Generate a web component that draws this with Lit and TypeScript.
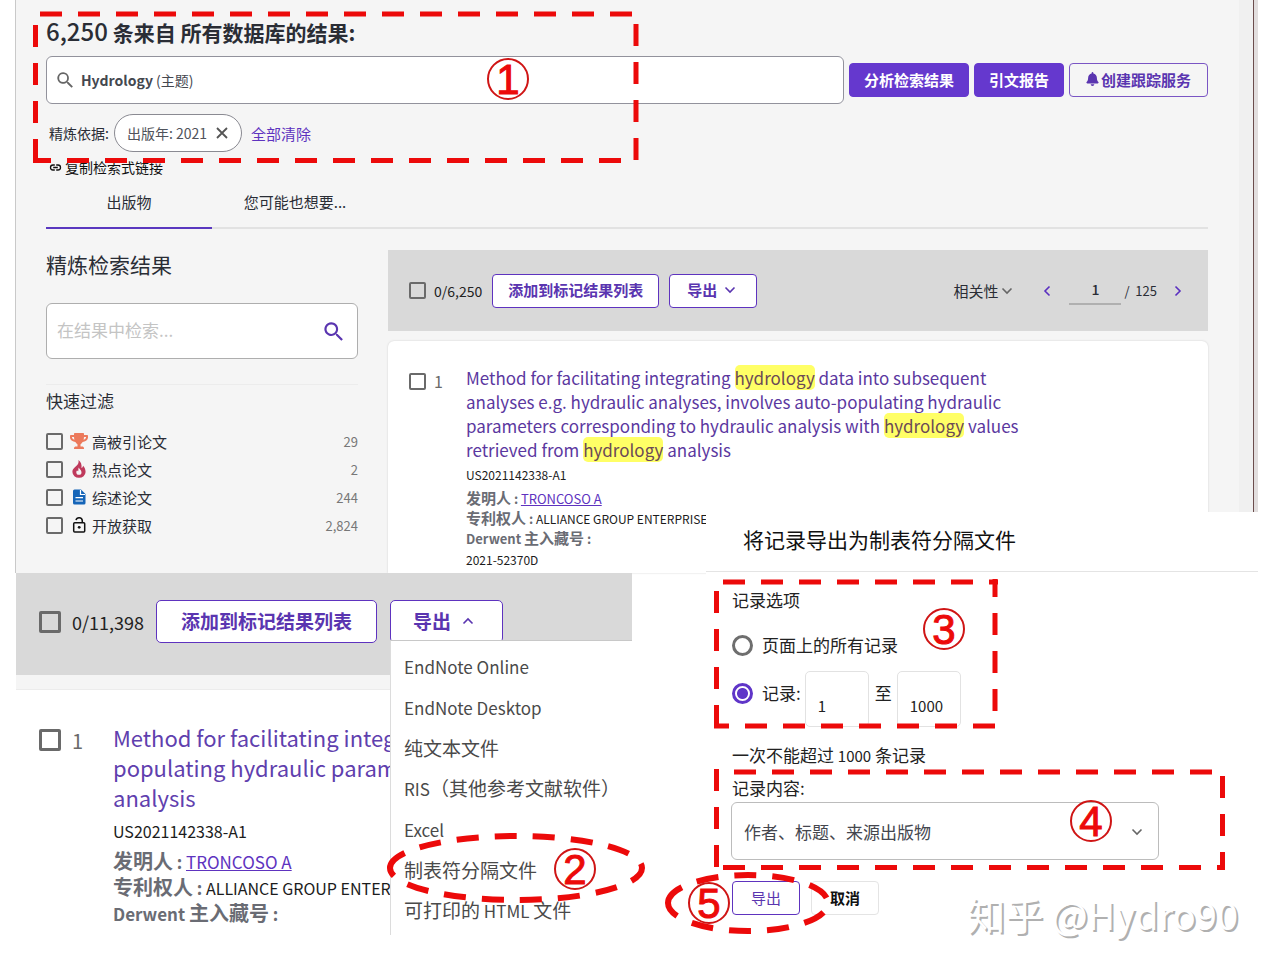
import { LitElement, html, svg, css } from "lit";
import { customElement, property } from "lit/decorators.js";

const chevron = (d: string, cls = "chev") =>
  html`<svg class=${cls} viewBox="0 0 12 12" aria-hidden="true"><path d=${d} fill="none" stroke="currentColor" stroke-width="1.6"/></svg>`;
const DOWN = "M1.5 3.5 6 8l4.5-4.5";
const UP = "M1.5 8.5 6 4l4.5 4.5";
const LEFT = "M8.5 1.5 4 6l4.5 4.5";
const RIGHT = "M3.5 1.5 8 6l-4.5 4.5";

const searchIcon = html`<svg class="search-icon" viewBox="0 0 18 18" aria-hidden="true">
  <path fill="currentColor" d="M12.9 11.3h-.8l-.3-.3a6.5 6.5 0 1 0-.7.7l.3.3v.8l5 5 1.5-1.5zm-6 0a4.5 4.5 0 1 1 0-9 4.5 4.5 0 0 1 0 9z"/></svg>`;

const filters = [
  {
    name: "高被引论文",
    count: "29",
    icon: html`<svg class="mark" viewBox="0 0 576 512"><path fill="#ec7a5c" d="M552 64H448V24c0-13.3-10.7-24-24-24H152c-13.3 0-24 10.7-24 24v40H24C10.7 64 0 74.7 0 88v56c0 35.7 22.5 72.4 61.9 100.7 31.5 22.7 69.8 37.1 110 41.7C203.3 338.5 240 360 240 360v72h-48c-35.3 0-64 20.7-64 56v12c0 6.6 5.4 12 12 12h296c6.6 0 12-5.4 12-12v-12c0-35.3-28.7-56-64-56h-48v-72s36.7-21.5 68.1-73.6c40.3-4.6 78.6-19 110-41.7 39.3-28.3 61.9-65 61.9-100.7V88c0-13.3-10.7-24-24-24zM99.3 192.8C74.9 175.2 64 155.6 64 144v-16h64.2c1 32.6 5.8 61.2 12.8 86.2-15.1-5.2-29.2-12.4-41.7-21.4zM512 144c0 16.1-17.7 36.1-35.3 48.8-12.5 9-26.7 16.2-41.8 21.4 7-25 11.8-53.6 12.8-86.2H512v16z"/></svg>`,
  },
  {
    name: "热点论文",
    count: "2",
    icon: html`<svg class="mark" viewBox="0 0 18 18"><path fill="#bf3a5c" fill-rule="evenodd" d="M8.4 0c.6 2.400-.1 3.700-1.400 5.300C5 7.400 2.400 8.800 2.400 12A6.500 6 0 0 0 9 17.800 6.500 6 0 0 0 15.600 12c0-2.700-1-4.700-2.500-6.300-.2 1.200-.8 2-1.600 2.300C12 4.600 10.800 1.600 8.400 0zM8.800 7.600c.2 1.700 2.700 2.300 2.700 4.600a2.600 2.600 0 0 1-5.200.1c0-.8.3-1.500.8-2 .2.700.6 1 1.100 1 .4-1.200-.2-2.300.6-3.700z"/></svg>`,
  },
  {
    name: "综述论文",
    count: "244",
    icon: html`<svg class="mark" viewBox="0 0 18 18"><path fill="#1565b8" d="M4.500 1.500h6.500l4.500 4.500v9a1.500 1.500 0 0 1-1.500 1.500H4.500A1.500 1.500 0 0 1 3 15V3a1.500 1.500 0 0 1 1.500-1.500z"/><path fill="none" stroke="#fff" stroke-width="1.200" d="M10.500 2v4.500H15M5.500 9.600h7.500M5.500 13h7.500"/></svg>`,
  },
  {
    name: "开放获取",
    count: "2,824",
    icon: html`<svg class="mark" viewBox="0 0 18 18"><rect x="3.700" y="6.700" width="11" height="9.200" rx="1" fill="none" stroke="#111" stroke-width="1.500"/><path fill="none" stroke="#111" stroke-width="1.500" d="M6 4.200a3.200 3.200 0 0 1 6.300.4v2"/><circle cx="9.200" cy="11.300" r="1.400" fill="#111"/></svg>`,
  },
];

const exportFormats = [
  html`EndNote Online`,
  html`EndNote Desktop`,
  html`<span class="cjk">纯文本文件</span>`,
  html`RIS<span class="cjk">（其他参考文献软件）</span>`,
  html`Excel`,
  html`<span class="cjk">制表符分隔文件</span>`,
  html`<span class="cjk">可打印的</span> HTML <span class="cjk">文件</span>`,
];

const base = css`
  * {
    box-sizing: border-box;
  }
  :host {
    display: block;
    font-family: "Noto Sans CJK SC", "Noto Sans", sans-serif;
    color: #2a2d35;
  }
  h1, h2, h3, p, ul {
    margin: 0;
    padding: 0;
    font-weight: 400;
  }
  ul {
    list-style: none;
  }
  a {
    color: #5e33bf;
  }
  button, input, select {
    font-family: inherit;
    color: inherit;
    margin: 0;
  }
  button {
    padding: 0;
    border: 0;
    background: none;
    white-space: nowrap;
  }
  svg {
    display: block;
    flex: none;
  }
  .chev {
    width: 12px;
    height: 12px;
  }
  input[type="checkbox"] {
    appearance: none;
    flex: none;
    width: 17px;
    height: 17px;
    border: 2px solid #6a6a6a;
    border-radius: 2px;
  }
  .btn {
    display: inline-flex;
    align-items: center;
    justify-content: center;
    height: 34px;
    padding-bottom: 2px;
    border: 1px solid #5e33bf;
    border-radius: 4px;
    background: #fff;
    color: #5a35b0;
    font-size: 15px;
    font-weight: 700;
  }
`;

/* Red dashed frame or oval with a circled step number. */
@customElement("step-mark")
export class StepMark extends LitElement {
  @property({ type: Number }) step = 1;

  static styles = css`
    :host {
      display: block;
      pointer-events: none;
    }
    svg {
      display: block;
      overflow: visible;
      fill: none;
      stroke: #ec0a0a;
      stroke-width: 5;
    }
    .oval {
      stroke-width: 6;
      stroke-dasharray: 22 16;
    }
    .ring {
      stroke: #cf1515;
      stroke-width: 2;
    }
    text {
      fill: #ec0a0a;
      stroke-width: 1;
      font: 42px "Liberation Sans", Arial, sans-serif;
      text-anchor: middle;
    }
  `;

  private edge(d: string, offset = 0) {
    return svg`<path d=${d} stroke-dasharray="22 16" stroke-dashoffset=${offset} />`;
  }

  private badge(x: number, y: number) {
    return svg`<circle class="ring" cx=${x} cy=${y} r="20" /><text x=${x} y=${y + 15}>${this.step}</text>`;
  }

  render() {
    switch (this.step) {
      case 1:
        return html`<svg width="605" height="152">
          ${this.edge("M7 3H600")}${this.edge("M2.500 14V151")}
          ${this.edge("M0 149.500H600", 4)}${this.edge("M603 13V149")}
          ${this.badge(475, 68)}
        </svg>`;
      case 2:
        return html`<svg width="258" height="72">
          <path class="oval" d="M3 36A126 32 0 0 1 255 36A126 32 0 0 1 3 36" />${this.badge(188, 37)}
        </svg>`;
      case 3:
        return html`<svg width="285" height="150">
          ${this.edge("M9 3H284")}${this.edge("M2.500 12V149")}
          ${this.edge("M0 147H281", 7)}${this.edge("M281 0V134", 4)}
          ${this.badge(230, 50)}
        </svg>`;
      case 4:
        return html`<svg width="511" height="101">
          ${this.edge("M20 3H499")}${this.edge("M2.500 0V100")}
          ${this.edge("M9 98.500H511")}${this.edge("M508.500 7V101")}
          ${this.badge(377, 52)}
        </svg>`;
      default:
        return html`<svg width="164" height="62">
          <path class="oval" d="M3 31A80 28 0 0 1 163 31A80 28 0 0 1 3 31" />${this.badge(44, 31)}
        </svg>`;
    }
  }
}

@customElement("results-page")
export class ResultsPage extends LitElement {
  static styles = [
    base,
    css`
      :host {
        position: relative;
        display: flex;
        background: #f5f5f5;
        border-left: 1px solid #c9c9c9;
        border-right: 4px solid #e2dede;
      }
      .content {
        flex: 1;
        min-width: 0;
        padding: 15px 31px 0 30px;
      }
      .rail {
        width: 15px;
        background: #f0f0f0;
        border-right: 1px solid #6b4c4c;
      }
      h1 {
        height: 32px;
        font-size: 21px;
        line-height: 32px;
        font-weight: 700;
      }
      .total {
        font-size: 24px;
        font-weight: 500;
      }
      .query-row {
        display: flex;
        align-items: center;
        gap: 5px;
        margin-top: 9px;
      }
      .query {
        flex: 1;
        display: flex;
        align-items: center;
        gap: 8px;
        height: 48px;
        padding-left: 10px;
        border: 1px solid #92929c;
        border-radius: 6px;
        background: #fff;
        font-size: 14px;
        color: #44474f;
      }
      .query .search-icon {
        width: 16px;
        height: 16px;
        color: #666;
      }
      .solid {
        padding: 0 14px 2px;
        background: #6538ce;
        border-color: #6538ce;
        color: #fff;
      }
      .alert {
        gap: 2px;
        padding: 0 16px 2px;
        background: none;
        border-color: #7a55c4;
      }
      .bell {
        width: 13px;
        height: 14px;
      }
      .refine {
        display: flex;
        align-items: center;
        margin-top: 10px;
        padding-left: 3px;
        font-size: 14px;
      }
      .chip {
        display: flex;
        align-items: center;
        gap: 9px;
        height: 38px;
        margin: 0 9px 0 5px;
        padding: 0 13px 0 12px;
        border: 1px solid #8a8a92;
        border-radius: 19px;
        background: #fff;
        color: #50535b;
        font-size: 14px;
      }
      .chip svg {
        width: 12px;
        height: 12px;
      }
      .refine a {
        font-size: 15px;
        text-decoration: none;
      }
      .copy {
        display: flex;
        align-items: center;
        gap: 3px;
        margin-top: 3px;
        padding-left: 3px;
        font-size: 14px;
        line-height: 24px;
        color: #111;
      }
      .copy svg {
        width: 13px;
        height: 13px;
      }
      .tabs {
        display: flex;
        height: 50px;
        border-bottom: 2px solid #e2e2e2;
      }
      .tab {
        width: 166px;
        height: 50px;
        padding-bottom: 4px;
        font-size: 15px;
        border-bottom: 2px solid transparent;
      }
      .tab.on {
        border-color: #5a38c0;
      }
      .columns {
        display: grid;
        grid-template-columns: 312px minmax(0, 1fr);
        gap: 30px;
        margin-top: 21px;
      }
      h2 {
        font-size: 21px;
        line-height: 28px;
      }
      .within {
        display: flex;
        align-items: center;
        height: 56px;
        margin-top: 25px;
        padding: 0 14px 0 10px;
        border: 1px solid #aeaeae;
        border-radius: 6px;
        background: #fff;
      }
      .within input {
        flex: 1;
        min-width: 0;
        padding: 0 0 3px;
        border: 0;
        outline: 0;
        background: none;
        font-size: 17px;
      }
      .within input::placeholder {
        color: #c4c4c4;
      }
      .within .search-icon {
        width: 19px;
        height: 19px;
        color: #5a35b0;
      }
      h3 {
        margin-top: 25px;
        padding-top: 4px;
        border-top: 1px solid #ececec;
        font-size: 17px;
        line-height: 24px;
      }
      .filters {
        margin-top: 14px;
      }
      .filters label {
        display: flex;
        align-items: center;
        height: 28px;
        font-size: 15px;
      }
      .mark {
        width: 18px;
        height: 18px;
        margin: 0 4px 0 7px;
      }
      .count {
        margin-left: auto;
        font-size: 13px;
        color: #777;
      }
      .toolbar {
        display: flex;
        align-items: center;
        height: 81px;
        padding: 0 24px 0 21px;
        background: #d9d9d9;
        font-size: 14px;
      }
      .picked {
        display: flex;
        align-items: center;
        gap: 8px;
        margin-right: 10px;
        color: #222;
      }
      .toolbar .btn {
        padding: 0 15px 2px;
        margin-right: 10px;
        gap: 7px;
      }
      .toolbar .export {
        padding: 0 20px 2px 17px;
      }
      .sort {
        display: flex;
        align-items: center;
        gap: 3px;
        margin-left: auto;
        margin-right: 28px;
        font-size: 15px;
      }
      .sort .chev {
        color: #666;
      }
      .arrow {
        color: #5a2fc0;
      }
      .page-no {
        width: 52px;
        height: 28px;
        margin: 0 3px 0 16px;
        padding: 0 0 2px;
        border: 0;
        border-bottom: 2px solid #b0b0b0;
        background: none;
        text-align: center;
        font-size: 14px;
        font-weight: 500;
      }
      .pages {
        margin-right: 15px;
        white-space: pre;
        font-size: 13px;
      }
      .card {
        display: flex;
        align-items: flex-start;
        margin-top: 10px;
        padding: 25px 21px 3px;
        border-radius: 6px 6px 0 0;
        background: #fff;
        box-shadow: 0 0 2px #ccc;
      }
      .pick {
        display: flex;
        align-items: center;
        gap: 8px;
        width: 57px;
        height: 30px;
        font-size: 16px;
        color: #6a6a6a;
      }
      .title {
        display: block;
        max-width: 560px;
        font-size: 17px;
        line-height: 24px;
        text-decoration: none;
        color: #5b389f;
      }
      mark {
        border-radius: 5px;
        background: #ffff66;
        color: #6b4a56;
      }
      .meta {
        font-size: 12px;
        line-height: 20px;
        color: #1c1c1c;
      }
      .meta p {
        height: 20px;
      }
      .meta .id {
        margin: 3px 0;
      }
      .meta b,
      .meta a {
        font-size: 13px;
      }
      .meta b {
        color: #6a6c74;
      }
      .meta .cjk {
        font-size: 15px;
      }
      .meta .last {
        margin-top: 2px;
      }
      step-mark {
        position: absolute;
        left: 17px;
        top: 11px;
      }
    `,
  ];

  render() {
    return html`
      <div class="content">
        <h1><span class="total">6,250</span> 条来自 所有数据库的结果:</h1>
        <div class="query-row">
          <div class="query">${searchIcon}<span><b>Hydrology</b> (主题)</span></div>
          <button class="btn solid">分析检索结果</button>
          <button class="btn solid">引文报告</button>
          <button class="btn alert">
            <svg class="bell" viewBox="0 0 448 512"><path fill="currentColor" d="M224 512c35.320 0 63.970-28.650 63.970-64H160.030c0 35.350 28.650 64 63.970 64zm215.390-149.710c-19.320-20.760-55.470-51.990-55.470-154.290 0-77.700-54.480-139.900-127.940-155.160V32c0-17.670-14.320-32-31.980-32s-31.980 14.330-31.980 32v20.840C118.560 68.100 64.080 130.300 64.080 208c0 102.300-36.150 133.530-55.470 154.290-6 6.450-8.660 14.160-8.610 21.710.110 16.400 12.980 32 32.100 32h383.800c19.120 0 32-15.600 32.100-32 .050-7.550-2.610-15.270-8.610-21.710z"/></svg>
            创建跟踪服务
          </button>
        </div>
        <div class="refine">
          精炼依据:
          <button class="chip">出版年: 2021
            <svg viewBox="0 0 12 12"><path d="M1 1l10 10M11 1 1 11" stroke="#555" stroke-width="1.800"/></svg>
          </button>
          <a href="#clear">全部清除</a>
        </div>
        <button class="copy">
          <svg viewBox="0 0 13 13"><path d="M5.800 4H4a2.500 2.500 0 0 0 0 5h1.800M7.200 4H9a2.500 2.500 0 0 1 0 5H7.200M4.200 6.500h4.600" fill="none" stroke="currentColor" stroke-width="1.300"/></svg>
          复制检索式链接
        </button>
        <nav class="tabs">
          <button class="tab on">出版物</button>
          <button class="tab">您可能也想要...</button>
        </nav>
        <div class="columns">
          <aside>
            <h2>精炼检索结果</h2>
            <div class="within">
              <input type="text" aria-label="在结果中检索" placeholder="在结果中检索..." />
              <button aria-label="检索">${searchIcon}</button>
            </div>
            <h3>快速过滤</h3>
            <ul class="filters">
              ${filters.map(
                (f) => html`<li><label><input type="checkbox" />${f.icon}${f.name}<span class="count">${f.count}</span></label></li>`
              )}
            </ul>
          </aside>
          <main>
            <div class="toolbar">
              <label class="picked"><input type="checkbox" />0/6,250</label>
              <button class="btn">添加到标记结果列表</button>
              <button class="btn export">导出 ${chevron(DOWN)}</button>
              <button class="sort">相关性 ${chevron(DOWN)}</button>
              <button class="arrow" aria-label="上一页">${chevron(LEFT)}</button>
              <input class="page-no" type="text" aria-label="页码" value="1" />
              <span class="pages">/  125</span>
              <button class="arrow" aria-label="下一页">${chevron(RIGHT)}</button>
            </div>
            <article class="card">
              <label class="pick"><input type="checkbox" />1</label>
              <div>
                <a class="title" href="#record">Method for facilitating integrating <mark>hydrology</mark> data into subsequent analyses e.g. hydraulic analyses, involves auto-populating hydraulic parameters corresponding to hydraulic analysis with <mark>hydrology</mark> values retrieved from <mark>hydrology</mark> analysis</a>
                <div class="meta">
                  <p class="id">US2021142338-A1</p>
                  <p><b><span class="cjk">发明人</span> :</b> <a href="#inventor">TRONCOSO A</a></p>
                  <p><b><span class="cjk">专利权人</span> :</b> ALLIANCE GROUP ENTERPRISE</p>
                  <p><b>Derwent <span class="cjk">主入藏号</span> :</b></p>
                  <p class="last">2021-52370D</p>
                </div>
              </div>
            </article>
          </main>
        </div>
      </div>
      <div class="rail"></div>
      <step-mark .step=${1}></step-mark>
    `;
  }
}

@customElement("export-menu")
export class ExportMenu extends LitElement {
  static styles = [
    base,
    css`
      :host {
        position: relative;
      }
      .toolbar {
        display: flex;
        align-items: flex-start;
        padding: 27px 0 32px 23px;
        background: #d9d9d9;
      }
      input[type="checkbox"] {
        width: 22px;
        height: 22px;
        border-width: 3px;
      }
      .picked {
        display: flex;
        align-items: center;
        gap: 11px;
        width: 117px;
        height: 43px;
        font-size: 18px;
        color: #222;
      }
      .btn {
        height: 43px;
        padding: 0 24px 2px;
        border-radius: 5px;
        font-size: 19px;
        white-space: nowrap;
      }
      .export {
        gap: 11px;
        margin-left: 13px;
        padding: 0 28px 2px 22px;
      }
      .strip {
        height: 14px;
        background: #f5f5f5;
      }
      .card {
        display: flex;
        align-items: flex-start;
        padding: 32px 0 8px 23px;
        border-top: 1px solid #ececec;
        background: #fff;
      }
      .pick {
        display: flex;
        flex: none;
        align-items: center;
        gap: 11px;
        width: 74px;
        height: 36px;
        font-size: 20px;
        color: #6a6a6a;
      }
      .record {
        width: 277px;
        overflow: hidden;
        white-space: nowrap;
      }
      .title {
        display: block;
        font-size: 22px;
        line-height: 30px;
        text-decoration: none;
        color: #5f40ae;
      }
      .meta {
        font-size: 16px;
        line-height: 26px;
        color: #1c1c1c;
      }
      .meta p {
        height: 26px;
      }
      .meta .id {
        margin: 6px 0 4px;
      }
      .meta b,
      .meta a {
        font-size: 17px;
      }
      .meta b {
        color: #6a6c74;
      }
      .meta .cjk {
        font-size: 20px;
      }
      .menu {
        position: absolute;
        left: 374px;
        right: 0;
        top: 67px;
        bottom: 0;
        display: grid;
        grid-auto-rows: 1fr;
        padding: 6px 0 4px 13px;
        border-left: 1px solid #dcdcdc;
        border-top: 1px solid #c8c8c8;
        background: #fff;
      }
      .menu li {
        display: flex;
        align-items: center;
      }
      .menu button {
        font-size: 17px;
        line-height: 32px;
        text-align: left;
        color: #4a4a4a;
      }
      .menu .cjk {
        font-size: 19px;
      }
      step-mark {
        position: absolute;
        left: 371px;
        top: 259px;
      }
    `,
  ];

  render() {
    return html`
      <div class="toolbar">
        <label class="picked"><input type="checkbox" />0/11,398</label>
        <button class="btn">添加到标记结果列表</button>
        <button class="btn export" aria-expanded="true">导出 ${chevron(UP)}</button>
      </div>
      <div class="strip"></div>
      <article class="card">
        <label class="pick"><input type="checkbox" />1</label>
        <div class="record">
          <a class="title" href="#record">Method for facilitating integrating<br />populating hydraulic parameters<br />analysis</a>
          <div class="meta">
            <p class="id">US2021142338-A1</p>
            <p><b><span class="cjk">发明人</span> :</b> <a href="#inventor">TRONCOSO A</a></p>
            <p><b><span class="cjk">专利权人</span> :</b> ALLIANCE GROUP ENTERPRISE</p>
            <p><b>Derwent <span class="cjk">主入藏号</span> :</b></p>
          </div>
        </div>
      </article>
      <ul class="menu">
        ${exportFormats.map((f) => html`<li><button>${f}</button></li>`)}
      </ul>
      <step-mark .step=${2}></step-mark>
    `;
  }
}

@customElement("export-dialog")
export class ExportDialog extends LitElement {
  static styles = [
    base,
    css`
      :host {
        position: relative;
        background: #fff;
        color: #222;
        font-size: 17px;
        line-height: 24px;
      }
      h2 {
        padding: 11px 0 16px 37px;
        border-bottom: 1px solid #e4e4e4;
        font-size: 21px;
        line-height: 32px;
        color: #111;
      }
      form {
        padding: 16px 99px 20px 25px;
      }
      input[type="radio"] {
        appearance: none;
        flex: none;
        width: 21px;
        height: 21px;
        margin: 0 9px 0 1px;
        border: 3px solid #6e6e6e;
        border-radius: 50%;
      }
      input[type="radio"]:checked {
        border-color: #5f35c8;
        background: radial-gradient(circle, #5f35c8 0 5px, #fff 6px);
      }
      .choice {
        display: flex;
        align-items: center;
      }
      .all {
        margin-top: 21px;
      }
      .range {
        display: flex;
        align-items: flex-start;
        margin-top: 14px;
      }
      .range .choice,
      .to {
        padding-top: 10px;
      }
      .to {
        margin: 0 5px 0 6px;
      }
      .number {
        width: 64px;
        height: 56px;
        padding: 12px 0 0 12px;
        border: 1px solid #e2e2e2;
        border-radius: 5px;
        background: #fff;
        font-size: 15px;
      }
      .number.from {
        margin-left: 4px;
      }
      .lead {
        padding-left: 1px;
      }
      .limit {
        margin: 16px 0 8px;
        padding-left: 1px;
      }
      .limit span {
        font-size: 15px;
      }
      .content {
        position: relative;
        margin-top: 2px;
      }
      select {
        appearance: none;
        display: block;
        width: 100%;
        height: 58px;
        padding: 0 12px;
        border: 1px solid #bcbcbc;
        border-radius: 6px;
        background: #fff;
        font-size: 17px;
        color: #44464e;
      }
      .content .chev {
        position: absolute;
        right: 16px;
        top: 24px;
        color: #666;
      }
      .actions {
        display: flex;
        gap: 11px;
        margin-top: 21px;
        padding-left: 1px;
      }
      .btn {
        width: 68px;
        font-weight: 400;
      }
      .cancel {
        border-color: #e4e4e4;
        color: #111;
        font-weight: 700;
      }
      step-mark {
        position: absolute;
      }
      .s3 {
        left: 8px;
        top: 67px;
      }
      .s4 {
        left: 8px;
        top: 257px;
      }
      .s5 {
        left: -41px;
        top: 360px;
      }
      .watermark {
        position: absolute;
        right: 20px;
        top: 375px;
        font-size: 38px;
        line-height: 54px;
        color: #fff;
        text-shadow: 2px 2px 0 #b0b0b0;
        white-space: nowrap;
      }
    `,
  ];

  render() {
    return html`
      <h2>将记录导出为制表符分隔文件</h2>
      <form>
        <p class="lead">记录选项</p>
        <label class="choice all"><input type="radio" name="scope" />页面上的所有记录</label>
        <div class="range">
          <label class="choice"><input type="radio" name="scope" checked />记录:</label>
          <input class="number from" type="text" aria-label="起始记录" value="1" />
          <span class="to">至</span>
          <input class="number" type="text" aria-label="结束记录" value="1000" />
        </div>
        <p class="limit">一次不能超过 <span>1000</span> 条记录</p>
        <label class="lead" for="fields">记录内容:</label>
        <div class="content">
          <select id="fields"><option>作者、标题、来源出版物</option></select>
          ${chevron(DOWN)}
        </div>
        <div class="actions">
          <button class="btn" type="button">导出</button>
          <button class="btn cancel" type="button">取消</button>
        </div>
      </form>
      <step-mark class="s3" .step=${3}></step-mark>
      <step-mark class="s4" .step=${4}></step-mark>
      <step-mark class="s5" .step=${5}></step-mark>
      <div class="watermark">知乎 @Hydro90</div>
    `;
  }
}

@customElement("app-root")
export class AppRoot extends LitElement {
  static styles = css`
    :host {
      display: grid;
      grid-template-columns: minmax(0, 617fr) 74px minmax(0, 552fr);
      grid-template-rows: auto 61px auto;
      padding: 0 11px 40px 15px;
      background: #fff;
    }
    results-page {
      grid-area: 1 / 1 / 3 / 4;
    }
    export-menu {
      grid-area: 3 / 1 / 4 / 2;
      margin-left: 1px;
    }
    export-dialog {
      grid-area: 2 / 3 / 4 / 4;
    }
  `;

  render() {
    return html`
      <results-page></results-page>
      <export-menu></export-menu>
      <export-dialog></export-dialog>
    `;
  }
}
